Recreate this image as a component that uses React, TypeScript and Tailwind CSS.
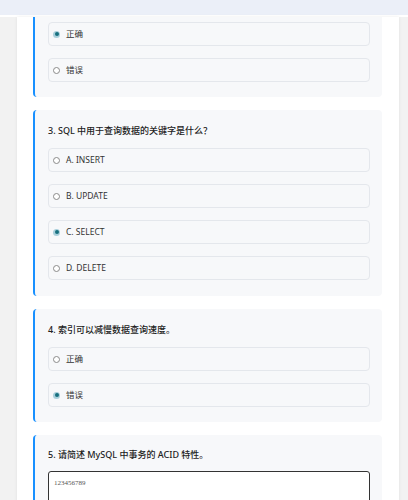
import React from 'react';

const font = { fontFamily: '"Noto Sans", "Noto Sans CJK SC", sans-serif' };

function Radio({ checked }: { checked: boolean }) {
  return checked ? (
    <span className="w-[7px] h-[7px] rounded-full bg-[#a9cfdb] flex items-center justify-center shrink-0">
      <span className="w-[4px] h-[4px] rounded-full bg-[#17707f]" />
    </span>
  ) : (
    <span className="w-[7px] h-[7px] rounded-full border border-[#8a8a8a] bg-white shrink-0" />
  );
}

function Option({ label, checked = false }: { label: string; checked?: boolean }) {
  return (
    <div className="h-[24px] border border-[#e4e7ec] rounded-[4px] bg-[#f7f8fa] flex items-center pl-[4px] gap-[6px]">
      <Radio checked={checked} />
      <span className="text-[8.5px] text-[#333] leading-none">{label}</span>
    </div>
  );
}

function Card({ title, children, top = true, pb = 'pb-[15px]' }: { title?: string; children: React.ReactNode; top?: boolean; pb?: string }) {
  return (
    <div
      className={`border-l-2 border-[#1890ff] bg-[#f7f8fa] pl-[13px] pr-3 ${pb} ${
        top ? 'rounded-[4px] pt-[15px]' : 'rounded-b-[4px] pt-[5px]'
      }`}
    >
      {title && <div className="text-[9px] leading-[12px] font-medium text-[#222] mb-[11px]">{title}</div>}
      {children}
    </div>
  );
}

export default function App() {
  return (
    <div className="min-h-screen bg-[#f2f2f2] overflow-hidden" style={font}>
      <div className="h-[15px] bg-[#ebeff8]" />
      <div className="h-[2px] bg-white" />
      <div className="ml-[17px] mr-[9px] bg-white shadow-[0_0_3px_rgba(0,0,0,0.08)] pl-4 pr-[17px] min-h-[483px] flex flex-col gap-[13px]">
        <Card top={false}>
          <div className="flex flex-col gap-3">
            <Option label="正确" checked />
            <Option label="错误" />
          </div>
        </Card>
        <Card title="3. SQL 中用于查询数据的关键字是什么？" pb="pb-[16px]">
          <div className="flex flex-col gap-3">
            <Option label="A. INSERT" />
            <Option label="B. UPDATE" />
            <Option label="C. SELECT" checked />
            <Option label="D. DELETE" />
          </div>
        </Card>
        <Card title="4. 索引可以减慢数据查询速度。">
          <div className="flex flex-col gap-3">
            <Option label="正确" />
            <Option label="错误" checked />
          </div>
        </Card>
        <div className="border-l-2 border-[#1890ff] bg-[#f7f8fa] pl-[13px] pr-3 pt-[14px] pb-[15px] rounded-[4px]">
          <div className="text-[9px] leading-[12px] font-medium text-[#222] mb-[10px]">5. 请简述 MySQL 中事务的 ACID 特性。</div>
          <div className="h-[70px] border-[1.5px] border-[#333] rounded-[3px] bg-white px-[5px] pt-[7px]">
            <span className="text-[7px] leading-[9px] text-[#555] block" style={{ fontFamily: '"Liberation Serif", serif' }}>
              123456789
            </span>
          </div>
        </div>
      </div>
    </div>
  );
}
